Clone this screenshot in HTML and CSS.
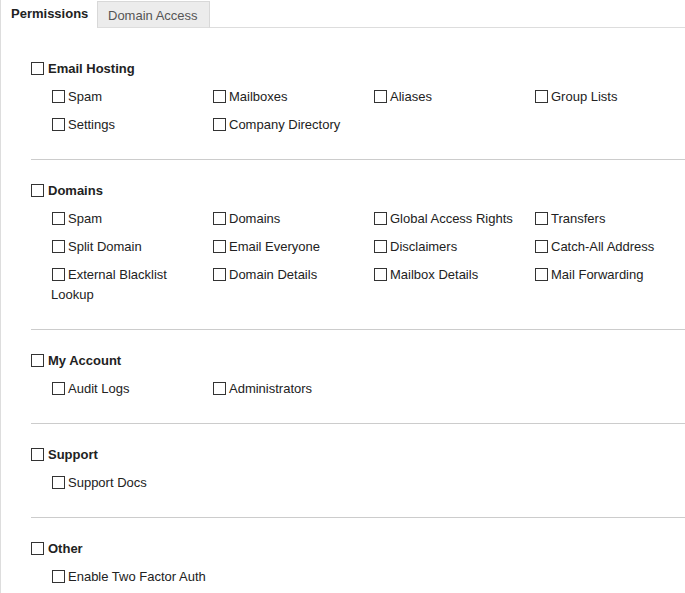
FILE: index.html
```html
<!DOCTYPE html>
<html>
<head>
<meta charset="utf-8">
<link rel="stylesheet" href="styles.css">
</head>
<body>
<div class="panel">
  <div class="tabs">
    <div class="tab active">Permissions</div>
    <div class="tab">Domain Access</div>
    <div class="tab-fill"></div>
  </div>
  <div class="content">
    <div class="section">
      <label class="head"><input type="checkbox" class="cb">Email Hosting</label>
      <div class="grid">
        <label class="item"><input type="checkbox" class="cb">Spam</label>
        <label class="item"><input type="checkbox" class="cb">Mailboxes</label>
        <label class="item"><input type="checkbox" class="cb">Aliases</label>
        <label class="item"><input type="checkbox" class="cb">Group Lists</label>
        <label class="item"><input type="checkbox" class="cb">Settings</label>
        <label class="item"><input type="checkbox" class="cb">Company Directory</label>
      </div>
    </div>
    <div class="section">
      <label class="head"><input type="checkbox" class="cb">Domains</label>
      <div class="grid">
        <label class="item"><input type="checkbox" class="cb">Spam</label>
        <label class="item"><input type="checkbox" class="cb">Domains</label>
        <label class="item"><input type="checkbox" class="cb">Global Access Rights</label>
        <label class="item"><input type="checkbox" class="cb">Transfers</label>
        <label class="item"><input type="checkbox" class="cb">Split Domain</label>
        <label class="item"><input type="checkbox" class="cb">Email Everyone</label>
        <label class="item"><input type="checkbox" class="cb">Disclaimers</label>
        <label class="item"><input type="checkbox" class="cb">Catch-All Address</label>
        <label class="item"><input type="checkbox" class="cb">External Blacklist Lookup</label>
        <label class="item"><input type="checkbox" class="cb">Domain Details</label>
        <label class="item"><input type="checkbox" class="cb">Mailbox Details</label>
        <label class="item"><input type="checkbox" class="cb">Mail Forwarding</label>
      </div>
    </div>
    <div class="section">
      <label class="head"><input type="checkbox" class="cb">My Account</label>
      <div class="grid">
        <label class="item"><input type="checkbox" class="cb">Audit Logs</label>
        <label class="item"><input type="checkbox" class="cb">Administrators</label>
      </div>
    </div>
    <div class="section">
      <label class="head"><input type="checkbox" class="cb">Support</label>
      <div class="grid">
        <label class="item"><input type="checkbox" class="cb">Support Docs</label>
      </div>
    </div>
    <div class="section last">
      <label class="head"><input type="checkbox" class="cb">Other</label>
      <div class="grid">
        <label class="item"><input type="checkbox" class="cb">Enable Two Factor Auth</label>
      </div>
    </div>
  </div>
</div>
</body>
</html>
```
FILE: styles.css
```css
html, body {
  margin: 0;
  padding: 0;
  background: #fff;
}
body {
  font-family: "Liberation Sans", Arial, sans-serif;
  font-size: 13px;
  color: #222;
}
.panel {
  border-left: 1px solid #ddd;
  min-height: 593px;
  box-sizing: border-box;
}
.tabs {
  display: flex;
  height: 28px;
  box-sizing: border-box;
  margin-left: -1px;
}
.tab {
  box-sizing: border-box;
  line-height: 20px;
}
.tab.active {
  width: 97px;
  padding: 4px 0 0 10px;
  font-weight: bold;
  color: #222;
  border-left: 1px solid #ddd;
}
.tab:not(.active) {
  margin-top: 1px;
  width: 113px;
  padding: 4px 0 0 10px;
  background: #ececec;
  border: 1px solid #d8d8d8;
  border-bottom: 1px solid #ddd;
  color: #555;
}
.tab-fill {
  flex: 1;
  border-bottom: 1px solid #ddd;
}
.content {
  padding: 11px 0 0 30px;
}
.section {
  padding: 17px 0 20px;
  border-bottom: 1px solid #ccc;
}
.section:first-child {
  padding-top: 16px;
}
.section.last {
  border-bottom: none;
  padding-bottom: 0;
}
.head {
  display: block;
  font-weight: bold;
  line-height: 20px;
  padding: 4px 0;
}
.grid {
  display: grid;
  grid-template-columns: repeat(4, 161px);
  padding-left: 20px;
}
.item {
  display: block;
  line-height: 20px;
  padding: 4px 0;
}
.cb {
  -webkit-appearance: none;
  appearance: none;
  width: 13px;
  height: 13px;
  box-sizing: border-box;
  border: 1px solid #333;
  border-radius: 0;
  background: #fff;
  margin: 0 3px 0 1px;
  vertical-align: -2px;
}
.head .cb {
  margin: 0 4px 0 0;
}
```
